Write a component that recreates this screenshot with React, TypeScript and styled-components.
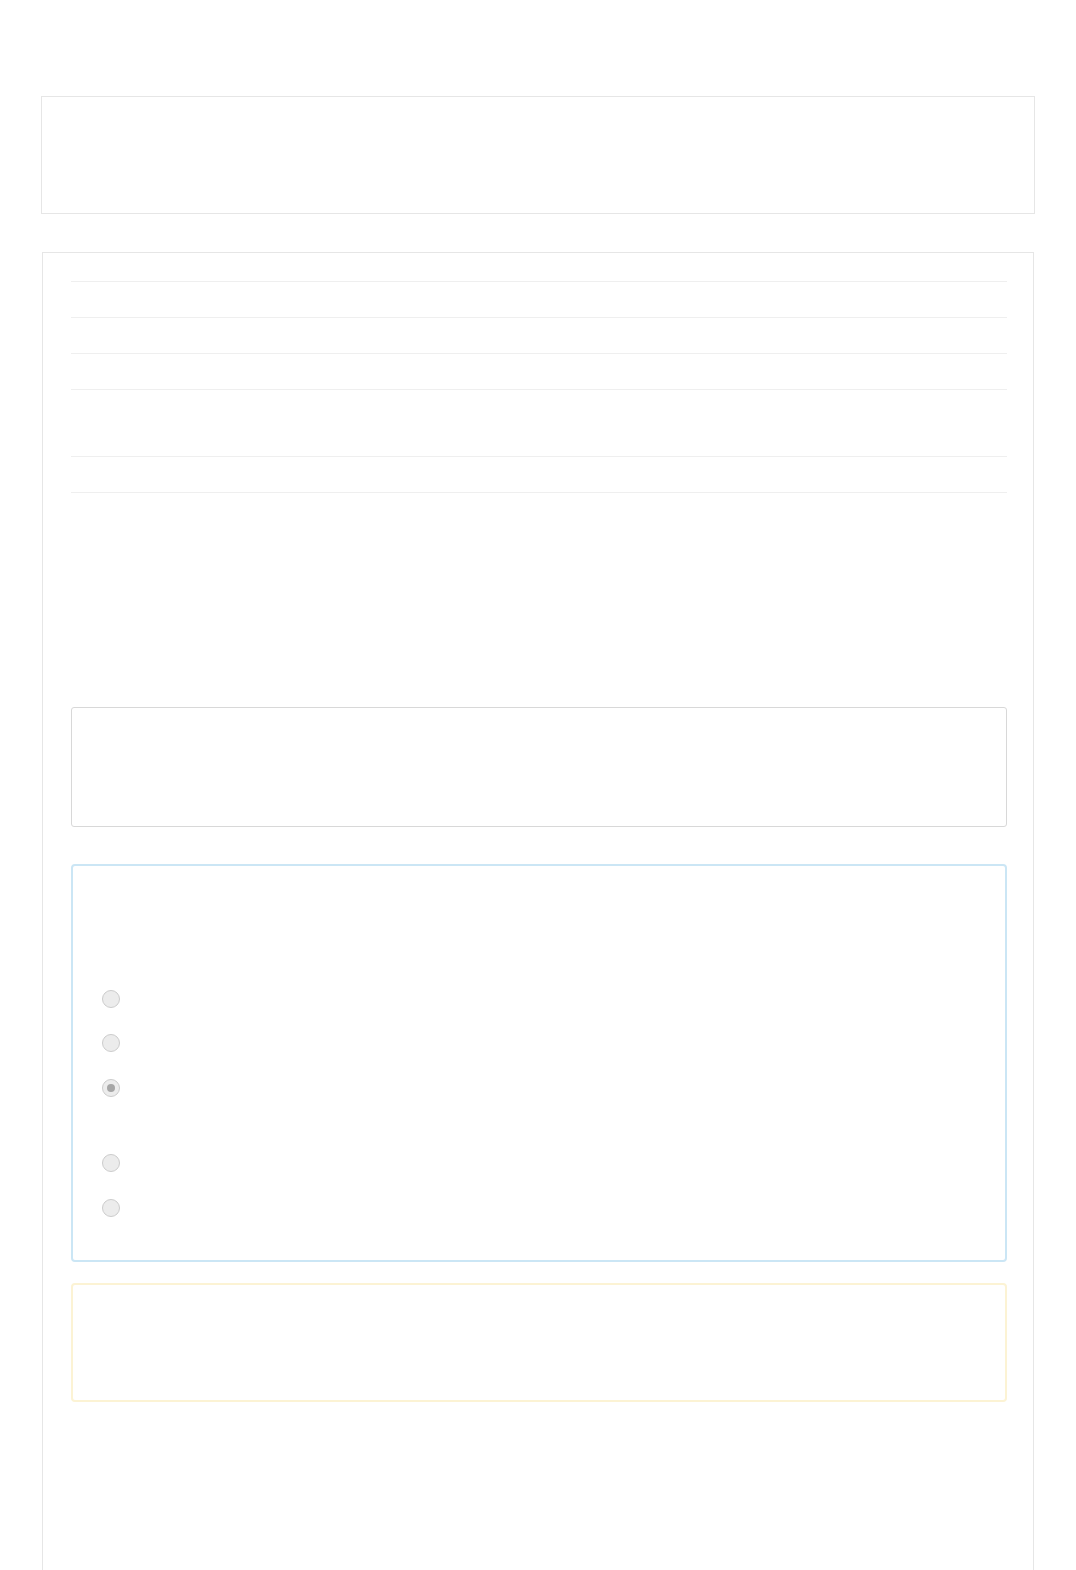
import React from 'react'
import styled, { createGlobalStyle } from 'styled-components'

const GlobalStyle = createGlobalStyle`
  html, body {
    margin: 0;
    padding: 0;
    background: #ffffff;
    font-family: "Liberation Sans", Arial, sans-serif;
  }
`

type Choice = { id: string; gap: number; checked?: boolean }

const choices: Choice[] = [
  { id: 'a', gap: 0 },
  { id: 'b', gap: 26 },
  { id: 'c', gap: 27, checked: true },
  { id: 'd', gap: 57 },
  { id: 'e', gap: 27 },
]

const rowHeights = [36, 36, 36, 67, 37]

function App() {
  return (
    <>
      <GlobalStyle />
      <Page>
        <Header />
        <Panel>
          <Table>
            {rowHeights.map((h, i) => (
              <Row key={i} $height={h} $last={i === rowHeights.length - 1} />
            ))}
          </Table>
          <Spacer $height={214} />
          <Notice />
          <Form>
            {choices.map((c) => (
              <Option key={c.id} $gap={c.gap}>
                <Radio $checked={c.checked} />
              </Option>
            ))}
          </Form>
          <Warning />
          <Spacer $height={200} />
        </Panel>
      </Page>
    </>
  )
}

export default App

// styles

const Page = styled.div`
  display: flex;
  flex-direction: column;
  padding: 96px 41px 0 41px;
  width: 1076px;
  box-sizing: border-box;
`

const Header = styled.header`
  height: 118px;
  width: 994px;
  box-sizing: border-box;
  border: 1px solid #e6e6e6;
`

const Panel = styled.section`
  margin-top: 38px;
  margin-left: 1px;
  width: 992px;
  box-sizing: border-box;
  border: 1px solid #e6e6e6;
  border-bottom: none;
  padding: 28px 26px 0 28px;
  display: flex;
  flex-direction: column;
`

const Table = styled.div`
  display: flex;
  flex-direction: column;
  width: 936px;
`

const Row = styled.div<{ $height: number; $last?: boolean }>`
  height: ${(p) => p.$height}px;
  box-sizing: border-box;
  border-top: 1px solid #efefef;
  ${(p) => (p.$last ? 'border-bottom: 1px solid #efefef;' : '')}
`

const Spacer = styled.div<{ $height: number }>`
  height: ${(p) => p.$height}px;
`

const Notice = styled.div`
  width: 936px;
  height: 120px;
  box-sizing: border-box;
  border: 1px solid #d8d8d8;
  border-radius: 3px;
`

const Form = styled.fieldset`
  margin: 37px 0 0;
  min-width: 0;
  width: 936px;
  height: 398px;
  box-sizing: border-box;
  border: 2px solid #cbe6f5;
  border-radius: 4px;
  padding: 124px 29px 0;
  display: flex;
  flex-direction: column;
`

const Option = styled.label<{ $gap: number }>`
  display: flex;
  align-items: center;
  margin-top: ${(p) => p.$gap}px;
  height: 18px;
`

const Radio = styled.span<{ $checked?: boolean }>`
  width: 18px;
  height: 18px;
  box-sizing: border-box;
  border-radius: 50%;
  border: 1px solid #cccccc;
  background: #ececec;
  display: flex;
  align-items: center;
  justify-content: center;

  &::after {
    content: '';
    width: 8px;
    height: 8px;
    border-radius: 50%;
    background: #a6a6a6;
    display: ${(p) => (p.$checked ? 'block' : 'none')};
  }
`

const Warning = styled.div`
  margin-top: 21px;
  width: 936px;
  height: 119px;
  box-sizing: border-box;
  border: 2px solid #fcf3d4;
  border-radius: 4px;
`
